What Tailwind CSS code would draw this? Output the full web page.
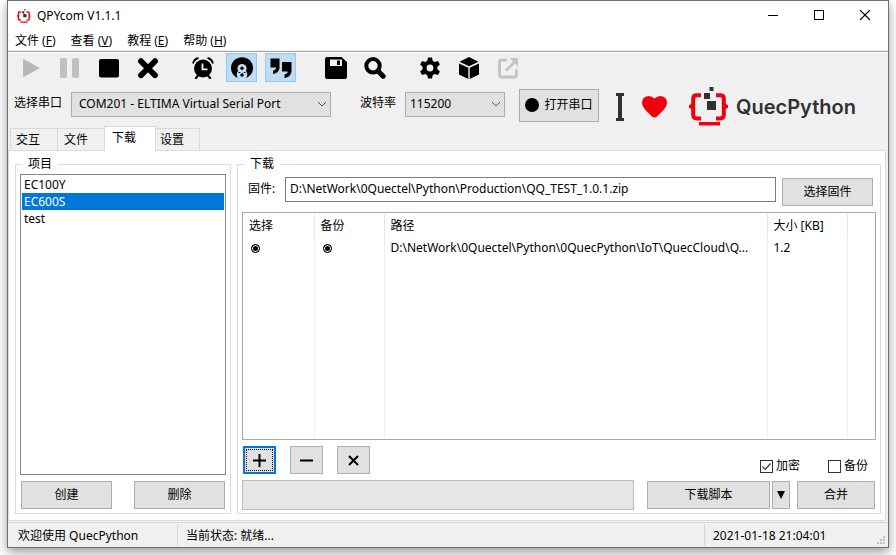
<!DOCTYPE html>
<html lang="zh-CN">
<head>
<meta charset="utf-8">
<meta name="viewport" content="width=device-width, initial-scale=1">
<title>QPYcom V1.1.1</title>
<script src="https://cdn.jsdelivr.net/npm/@tailwindcss/browser@4"></script>
</head>
<body class="bg-white font-['Noto_Sans','Noto_Sans_CJK_SC',sans-serif] text-xs leading-4 text-black">
<svg class="hidden" aria-hidden="true">
  <symbol id="mark" viewBox="0 0 40 39">
    <path d="M12 8.2H7.8Q4.2 8.2 4.2 11.5V28Q4.2 31.4 7.8 31.4H12M27 8.2h4.2q3.6 0 3.6 3.3V28q0 3.4-3.6 3.4H27" fill="none" stroke="#f0000c" stroke-width="4"/>
    <path d="M3 16.5v6L0 20.8v-2.6zM36 16.500v6l3-1.700v-2.600zM10 35h21v3.500H10z" fill="#f0000c"/>
    <path d="M20.500 0h4v4h-4zM15 6h6v6h-6zM18 14h9v9h-9z" fill="#303133"/>
  </symbol>
</svg>
<div class="flex min-h-screen pl-[7px] pr-[7px] pb-[7px]">
<div class="flex min-w-0 flex-1 flex-col border border-[#6f6f6f] bg-[#f0f0f0] shadow-[0_4px_10px_rgba(0,0,0,0.4)]">

  <header class="bg-white">
    <div class="flex h-[30px] items-center pl-[9px]">
      <svg class="h-3.5 w-3.5"><use href="#mark"/></svg>
      <h1 class="ml-1.5 flex-1">QPYcom V1.1.1</h1>
      <button aria-label="最小化" class="flex w-[46px] justify-center"><svg width="12" height="12" viewBox="0 0 12 12" shape-rendering="crispEdges"><path d="M1 5.500h10" stroke="#000"/></svg></button>
      <button aria-label="最大化" class="flex w-[46px] justify-center"><svg width="12" height="12" viewBox="0 0 12 12" shape-rendering="crispEdges"><path d="M1.500 .500h9v9h-9z" fill="none" stroke="#000"/></svg></button>
      <button aria-label="关闭" class="flex w-[46px] justify-center"><svg width="12" height="12" viewBox="0 0 12 12"><path d="M1 0l10 10M11 0L1 10" stroke="#000" stroke-width="1.100"/></svg></button>
    </div>
    <nav class="flex h-[19px] items-center gap-[15px] pl-[7px]">
      <a href="#">文件 (<u>F</u>)</a>
      <a href="#">查看 (<u>V</u>)</a>
      <a href="#">教程 (<u>E</u>)</a>
      <a href="#">帮助 (<u>H</u>)</a>
    </nav>
  </header>
  <div class="mt-px h-0.5 border-t border-[#a0a0a0] bg-white"></div>

  <div role="toolbar" aria-label="工具栏" class="flex gap-6 pl-[7px]">
    <div class="flex gap-2">
      <button aria-label="运行" disabled class="flex h-[29px] w-[31px] items-center justify-center"><svg width="22" height="22" viewBox="0 0 22 22"><path d="M3 2.500v17q0 .8.8.4l15.500-8.300q.6-.4 0-.8L3.800 2.100Q3 1.700 3 2.500z" fill="#b8b8b8"/></svg></button>
      <button aria-label="暂停" disabled class="flex h-[29px] w-[31px] items-center justify-center"><svg width="22" height="22" viewBox="0 0 22 22" fill="#c0c0c0"><rect x="1" y="1" width="7" height="20" rx="2"/><rect x="13" y="1" width="7" height="20" rx="2"/></svg></button>
      <button aria-label="停止" class="flex h-[29px] w-[31px] items-center justify-center"><svg width="22" height="22" viewBox="0 0 22 22"><rect x="1" y="2" width="20" height="18.500" rx="2"/></svg></button>
      <button aria-label="清除" class="flex h-[29px] w-[31px] items-center justify-center"><svg width="22" height="22" viewBox="0 0 22 22"><path d="M4 4.200l14 14M18 4.200l-14 14" stroke="#000" stroke-width="5.800" stroke-linecap="round"/></svg></button>
    </div>
    <div class="flex gap-2">
      <button aria-label="定时" class="flex h-[29px] w-[31px] items-center justify-center"><svg width="22" height="22" viewBox="0 0 22 22"><circle cx="11" cy="11.500" r="9"/><path d="M4 21l2.500-3M18 21l-2.500-3" stroke="#000" stroke-width="2.200" stroke-linecap="round"/><path d="M1 6.500Q2 2 6.500 1M21 6.500Q20 2 15.500 1" fill="none" stroke="#000" stroke-width="1.800"/><path d="M10.500 6.500v5.800h5" fill="none" stroke="#f0f0f0" stroke-width="1.800"/></svg></button>
      <button aria-label="调试" aria-pressed="true" class="flex h-[29px] w-[31px] items-center justify-center border border-[#90c8f6] bg-[#c0dcf3]"><svg width="22" height="22" viewBox="0 0 22 22"><path d="M5 20A11 10.800 0 1 1 17 20L15 21H7z"/><circle cx="11" cy="11.500" r="4.600" fill="#c0dcf3"/><circle cx="11" cy="17.500" r="5.300" fill="#c0dcf3"/><circle cx="11" cy="11.200" r="1.700"/><circle cx="11" cy="18" r="1.700"/><path d="M7.500 15.500h1.800M12.700 15.500h1.800" stroke="#000" stroke-width="1.200"/></svg></button>
      <button aria-label="引用" aria-pressed="true" class="flex h-[29px] w-[31px] items-center justify-center border border-[#90c8f6] bg-[#c0dcf3]"><svg width="24" height="22" viewBox="0 0 24 22"><path d="M1.500 1.500h9v9.500q-.5 5-6.500 6v-3.200q3-.8 3-3.300H1.500zM13 5h9.500v9.500q-.8 5.500-7 6.500v-3.500q3.200-.8 3.200-3H13z"/></svg></button>
    </div>
    <div class="flex gap-2">
      <button aria-label="保存" class="flex h-[29px] w-[31px] items-center justify-center"><svg width="22" height="22" viewBox="0 0 22 22"><path fill-rule="evenodd" d="M2 0h14.500L22 5v15q0 2-2 2H2q-2 0-2-2V2Q0 0 2 0zM5 2.500v6.500h12V2.500zM12 3.500h3v4.500h-3z"/></svg></button>
      <button aria-label="搜索" class="flex h-[29px] w-[31px] items-center justify-center"><svg width="22" height="22" viewBox="0 0 22 22"><circle cx="9" cy="8.800" r="6.700" fill="none" stroke="#000" stroke-width="4"/><path d="M14.500 14.500l4.700 4.700" stroke="#000" stroke-width="5" stroke-linecap="round"/></svg></button>
    </div>
    <div class="flex gap-2">
      <button aria-label="选项" class="flex h-[29px] w-[31px] items-center justify-center"><svg width="22" height="22" viewBox="0 0 22 22"><path fill-rule="evenodd" d="M9 .500h4l.7 3.300 2 1.100 3.200-1 2 3.500-2.500 2.300v2.600l2.500 2.300-2 3.500-3.200-1-2 1.100-.7 3.300H9l-.7-3.300-2-1.100-3.200 1-2-3.500 2.500-2.300V9.700L1.100 7.400l2-3.500 3.200 1 2-1.100zM11 7.600a3.400 3.400 0 1 0 0 6.800 3.400 3.400 0 0 0 0-6.800z"/></svg></button>
      <button aria-label="组件" class="flex h-[29px] w-[31px] items-center justify-center"><svg width="22" height="22" viewBox="0 0 22 22"><path d="M11 0l9.500 4.700L11 9.300 1.500 4.700zM1 6.500l9.300 4.300V22L1 17.500zM21 6.500l-9.300 4.300V22L21 17.500z"/></svg></button>
      <button aria-label="打开外部" disabled class="flex h-[29px] w-[31px] items-center justify-center"><svg width="22" height="22" viewBox="0 0 22 22"><path d="M10 3H4.500Q2.500 3 2.500 5v13q0 2 2 2h13q2 0 2-2v-5.500M9 13.500l8-8" fill="none" stroke="#c4c4c4" stroke-width="3"/><path d="M12.500 1H21v8.500z" fill="#c4c4c4"/></svg></button>
    </div>
  </div>

  <div class="flex h-11 items-center pl-1.5">
    <label for="port" class="w-[57px] pb-0.5">选择串口</label>
    <div class="relative">
      <select id="port" class="block h-[25px] w-[260px] appearance-none border border-[#adadad] bg-[#e1e1e1] pl-[7px]"><option>COM201 - ELTIMA Virtual Serial Port</option></select>
      <svg class="pointer-events-none absolute top-2 right-1" width="10" height="8" viewBox="0 0 10 8"><path d="M1 2l4 4 4-4" fill="none" stroke="#555"/></svg>
    </div>
    <label for="baud" class="ml-[29px] w-[45px] pb-0.5">波特率</label>
    <div class="relative">
      <select id="baud" class="block h-[25px] w-[100px] appearance-none border border-[#adadad] bg-[#e1e1e1] pl-1"><option>115200</option></select>
      <svg class="pointer-events-none absolute top-2 right-1" width="10" height="8" viewBox="0 0 10 8"><path d="M1 2l4 4 4-4" fill="none" stroke="#555"/></svg>
    </div>
    <button class="mt-0.5 ml-3.5 flex h-[33px] w-20 items-center justify-center gap-[5px] border border-[#adadad] bg-[#e1e1e1]"><span class="size-3.5 rounded-full bg-black"></span>打开串口</button>
    <div class="ml-4 flex items-center pt-[5px]">
      <svg width="10" height="28" viewBox="0 0 10 28"><path d="M1 0h8v3H7v22h2v3H1v-3h2V3H1z" fill="#303133"/></svg>
      <svg class="ml-[17px]" width="25" height="22" viewBox="0 0 25 22"><path d="M12.500 2.500Q15 0 18.500 0 25 .5 25 7q0 3-3 6.500L15 20.500q-2.500 2-5 0L3 13.500Q0 10 0 7 0 .5 6.500 0 10 0 12.500 2.500z" fill="#f0000c"/></svg>
      <svg class="ml-[22px]" width="40" height="39"><use href="#mark"/></svg>
      <span class="ml-[7px] font-['Inter',sans-serif] text-xl font-semibold text-[#303133]">QuecPython</span>
    </div>
  </div>

  <div role="tablist" class="flex items-end pl-0.5">
    <button role="tab" class="h-[22px] w-12 border border-b-0 border-[#d9d9d9] pl-[5px] text-left">交互</button>
    <button role="tab" class="-ml-px h-[22px] w-12 border border-b-0 border-[#d9d9d9] pl-1.5 text-left">文件</button>
    <button role="tab" aria-selected="true" class="relative -mb-px -ml-px h-[25px] w-[52px] border border-b-0 border-[#d9d9d9] bg-white pb-0.5 pl-[7px] text-left">下载</button>
    <button role="tab" class="h-[22px] w-11 border border-b-0 border-l-0 border-[#d9d9d9] pl-1 text-left">设置</button>
  </div>

  <main class="mr-0.5 flex flex-1 gap-1.5 border border-[#dcdcdc] bg-white pt-[5px] pr-1 pb-1.5 pl-1.5">
    <fieldset class="flex w-[216px] flex-col border border-[#dcdcdc] px-1 pb-1">
      <legend class="ml-0.5 px-1.5 leading-4">项目</legend>
      <ul role="listbox" aria-label="项目" class="mt-0.5 flex-1 border border-[#828790] p-px leading-[17px]">
        <li role="option" class="px-0.5">EC100Y</li>
        <li role="option" aria-selected="true" class="bg-[#0078d7] px-0.5 text-white">EC600S</li>
        <li role="option" class="px-0.5">test</li>
      </ul>
      <div class="mt-1.5 flex justify-between px-px">
        <button class="h-7 w-[91px] border border-[#adadad] bg-[#e1e1e1]">创建</button>
        <button class="h-7 w-[91px] border border-[#adadad] bg-[#e1e1e1]">删除</button>
      </div>
    </fieldset>

    <fieldset class="flex min-w-0 flex-1 flex-col border border-[#dcdcdc] px-1 pb-[3px]">
      <legend class="ml-0.5 px-1.5 leading-4">下载</legend>
      <div class="mt-[5px] flex items-start pr-[3px] pl-1.5">
        <label for="firmware" class="w-[37px] leading-6">固件:</label>
        <input id="firmware" class="h-[25px] min-w-0 flex-1 border border-[#7a7a7a] bg-white px-1 pb-0.5" value="D:\NetWork\0Quectel\Python\Production\QQ_TEST_1.0.1.zip">
        <button class="mt-px ml-1.5 h-7 w-[91px] border border-[#adadad] bg-[#e1e1e1]">选择固件</button>
      </div>
      <div class="mt-1.5 flex flex-1 border border-[#a5a9b0] py-px">
        <table class="w-full table-fixed border-collapse text-left">
          <thead>
            <tr class="h-6 *:border-r *:border-[#e5e5e5] *:pl-1.5 *:font-normal">
              <th class="w-[71px]">选择</th><th class="w-[70px]">备份</th><th>路径</th><th class="w-20">大小 [KB]</th><th class="w-7 border-r-0!"></th>
            </tr>
          </thead>
          <tbody>
            <tr class="h-5 *:border-r *:border-[#e9f1f8] *:pl-1.5">
              <td><input type="radio" name="pick" aria-label="选择" checked class="ml-0.5 block size-[9px] appearance-none rounded-full border border-black bg-black shadow-[inset_0_0_0_1px_white]"></td>
              <td><input type="radio" name="backup" aria-label="备份" checked class="ml-0.5 block size-[9px] appearance-none rounded-full border border-black bg-black shadow-[inset_0_0_0_1px_white]"></td>
              <td class="truncate">D:\NetWork\0Quectel\Python\0QuecPython\IoT\QuecCloud\Q...</td>
              <td>1.2</td><td class="border-r-0!"></td>
            </tr>
            <tr class="*:border-r *:border-[#e9f1f8]"><td></td><td></td><td></td><td></td><td class="border-r-0!"></td></tr>
          </tbody>
        </table>
      </div>
      <div class="mt-1.5 flex items-start gap-3.5 pl-px">
        <button aria-label="添加" class="flex h-7 w-[33px] items-center justify-center border-2 border-[#0078d7] bg-[#e1e1e1] outline-1 -outline-offset-4 outline-dotted outline-black"><svg width="15" height="15" viewBox="0 0 15 15"><path d="M1 7.500h13M7.500 1v13" stroke="#000" stroke-width="2"/></svg></button>
        <button aria-label="移除" class="flex h-7 w-[33px] items-center justify-center border border-[#adadad] bg-[#e1e1e1]"><svg width="15" height="15" viewBox="0 0 15 15"><path d="M1 7.500h13" stroke="#000" stroke-width="2"/></svg></button>
        <button aria-label="清空" class="flex h-7 w-[33px] items-center justify-center border border-[#adadad] bg-[#e1e1e1]"><svg width="15" height="15" viewBox="0 0 15 15"><path d="M3 3l9 9M12 3l-9 9" stroke="#000" stroke-width="2"/></svg></button>
        <div class="mt-3 ml-auto flex gap-7 pr-2">
          <label class="flex items-center gap-[3px]"><span class="relative size-[13px]"><input type="checkbox" checked class="block size-[13px] appearance-none border border-[#333] bg-white"><svg class="pointer-events-none absolute inset-0" width="13" height="13" viewBox="0 0 13 13"><path d="M2.500 6.500l2.800 2.800 5.200-5.800" fill="none" stroke="#333" stroke-width="1.200"/></svg></span>加密</label>
          <label class="flex items-center gap-[3px]"><input type="checkbox" class="block size-[13px] appearance-none border border-[#333] bg-white">备份</label>
        </div>
      </div>
      <div class="mt-1.5 flex items-center pr-px">
        <div role="progressbar" aria-label="下载进度" class="mr-[13px] h-[30px] flex-1 border border-[#bcbcbc] bg-[#e6e6e6]"></div>
        <button class="h-7 w-[123px] border border-[#adadad] bg-[#e1e1e1]">下载脚本</button>
        <button aria-label="更多" class="ml-0.5 flex h-7 w-[18px] items-center justify-center border border-[#adadad] bg-[#e1e1e1]"><svg width="8" height="8" viewBox="0 0 8 8"><path d="M0 0h8L4 8z"/></svg></button>
        <button class="ml-[7px] h-7 w-[78px] border border-[#adadad] bg-[#e1e1e1]">合并</button>
      </div>
    </fieldset>
  </main>

  <footer class="mt-px flex h-[25px] items-stretch border-t border-[#d7d7d7] py-px leading-6">
    <span class="w-[170px] border-r border-[#d7d7d7] pl-2.5">欢迎使用 QuecPython</span>
    <span class="flex-1 border-r border-[#d7d7d7] pl-2">当前状态: 就绪...</span>
    <span class="w-[172px] pl-2">2021-01-18 21:04:01</span>
    <svg class="mr-0.5 self-end" width="9" height="10" viewBox="0 0 9 10" fill="#bfbfbf"><path d="M6 0h2v2H6zM3 3h2v2H3zM6 3h2v2H6zM0 6h2v2H0zM3 6h2v2H3zM6 6h2v2H6z"/></svg>
  </footer>
</div>
</div>
</body>
</html>
